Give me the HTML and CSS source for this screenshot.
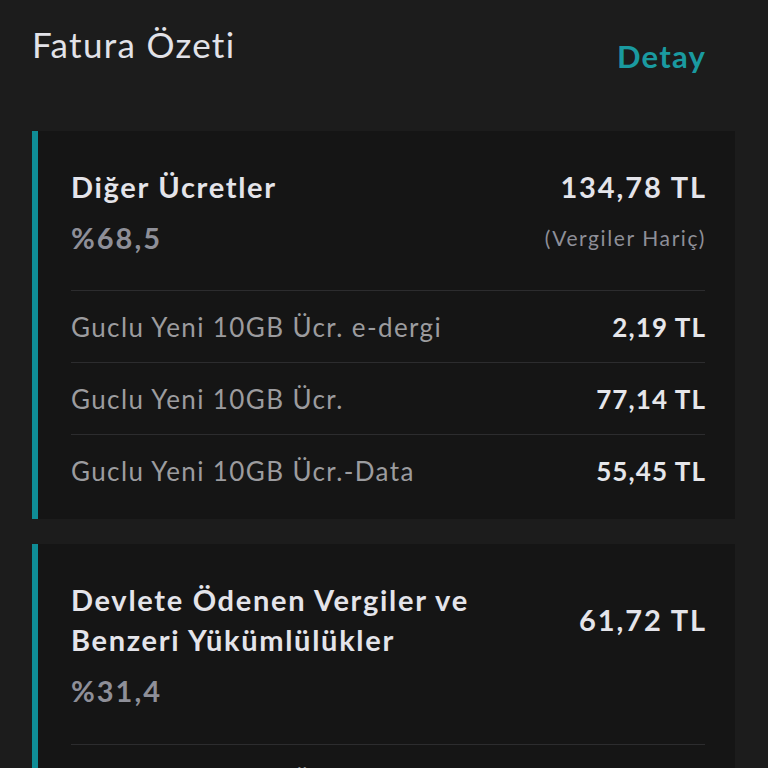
FILE: index.html
```html
<!DOCTYPE html>
<html lang="tr">
<head>
<meta charset="utf-8">
<link rel="stylesheet" href="styles.css">
</head>
<body>
<div class="page">
  <header class="header">
    <h1 class="page-title">Fatura Özeti</h1>
    <a class="detail-link">Detay</a>
  </header>

  <section class="card">
    <div class="card-head">
      <div class="card-title">Diğer Ücretler</div>
      <div class="card-amount">134,78 TL</div>
      <div class="card-percent">%68,5</div>
      <div class="card-note">(Vergiler Hariç)</div>
    </div>
    <div class="row"><span class="row-label">Guclu Yeni 10GB Ücr. e-dergi</span><span class="row-value">2,19 TL</span></div>
    <div class="row"><span class="row-label">Guclu Yeni 10GB Ücr.</span><span class="row-value">77,14 TL</span></div>
    <div class="row"><span class="row-label">Guclu Yeni 10GB Ücr.-Data</span><span class="row-value">55,45 TL</span></div>
  </section>

  <section class="card card-second">
    <div class="card-head">
      <div class="card-title">Devlete Ödenen Vergiler ve<br>Benzeri Yükümlülükler</div>
      <div class="card-amount">61,72 TL</div>
      <div class="card-percent">%31,4</div>
    </div>
    <div class="row"><span class="row-label">Guclu Yeni 10GB Ücr. KDV</span><span class="row-value">7,42 TL</span></div>
  </section>
</div>
</body>
</html>
```

FILE: styles.css
```css
* { box-sizing: border-box; }
html, body { margin: 0; padding: 0; }
body {
  background: #1c1c1c;
  font-family: "Lato", "Noto Sans", sans-serif;
  color: #e4e4ea;
  overflow: hidden;
  height: 768px;
}
.page { padding-top: 22px; }
.header {
  display: flex;
  justify-content: space-between;
  align-items: flex-start;
  padding: 0 63px 0 32px;
  height: 109px;
}
.page-title {
  margin: 0;
  font-size: 35px;
  font-weight: 400;
  letter-spacing: 1.3px;
  line-height: 44px;
  color: #e2e2e8;
}
.detail-link {
  margin-top: 14px;
  margin-right: -1px;
  font-size: 31px;
  font-weight: 700;
  letter-spacing: 1.2px;
  line-height: 40px;
  color: #1a9aa0;
}
.card {
  margin: 0 33px 0 32px;
  background: #151515;
  border-left: 6px solid #0f8d96;
  padding: 0 30px 13px 33px;
}
.card-second { margin-top: 25px; }
.card-head {
  display: grid;
  grid-template-columns: 1fr auto;
  padding: 36px 0 33px;
  border-bottom: 1px solid #2c2c2e;
}
.card-second .card-head { padding-bottom: 34px; }
.card-title {
  font-size: 29px;
  font-weight: 700;
  letter-spacing: 1.7px;
  line-height: 40px;
  color: #e4e4ea;
}
.card-amount {
  align-self: center;
  margin-right: -2px;
  font-size: 29px;
  font-weight: 700;
  letter-spacing: 1.9px;
  line-height: 40px;
  color: #e4e4ea;
  text-align: right;
}
.card-percent {
  margin-top: 12px;
  font-size: 29px;
  font-weight: 700;
  letter-spacing: 2px;
  line-height: 38px;
  color: #8e8f98;
}
.card-note {
  margin-top: 17px;
  margin-right: -1px;
  font-size: 21px;
  letter-spacing: 1.6px;
  line-height: 28px;
  color: #8e8f98;
  text-align: right;
}
.row {
  display: flex;
  justify-content: space-between;
  align-items: center;
  height: 72px;
  border-bottom: 1px solid #2c2c2e;
}
.row:last-child { border-bottom: none; height: 71px; }
.row-label {
  font-size: 26px;
  letter-spacing: 1.4px;
  color: #9c9c9f;
}
.row-value {
  margin-right: -1px;
  font-size: 26px;
  font-weight: 700;
  letter-spacing: 1.1px;
  color: #e6e6ea;
}
```
